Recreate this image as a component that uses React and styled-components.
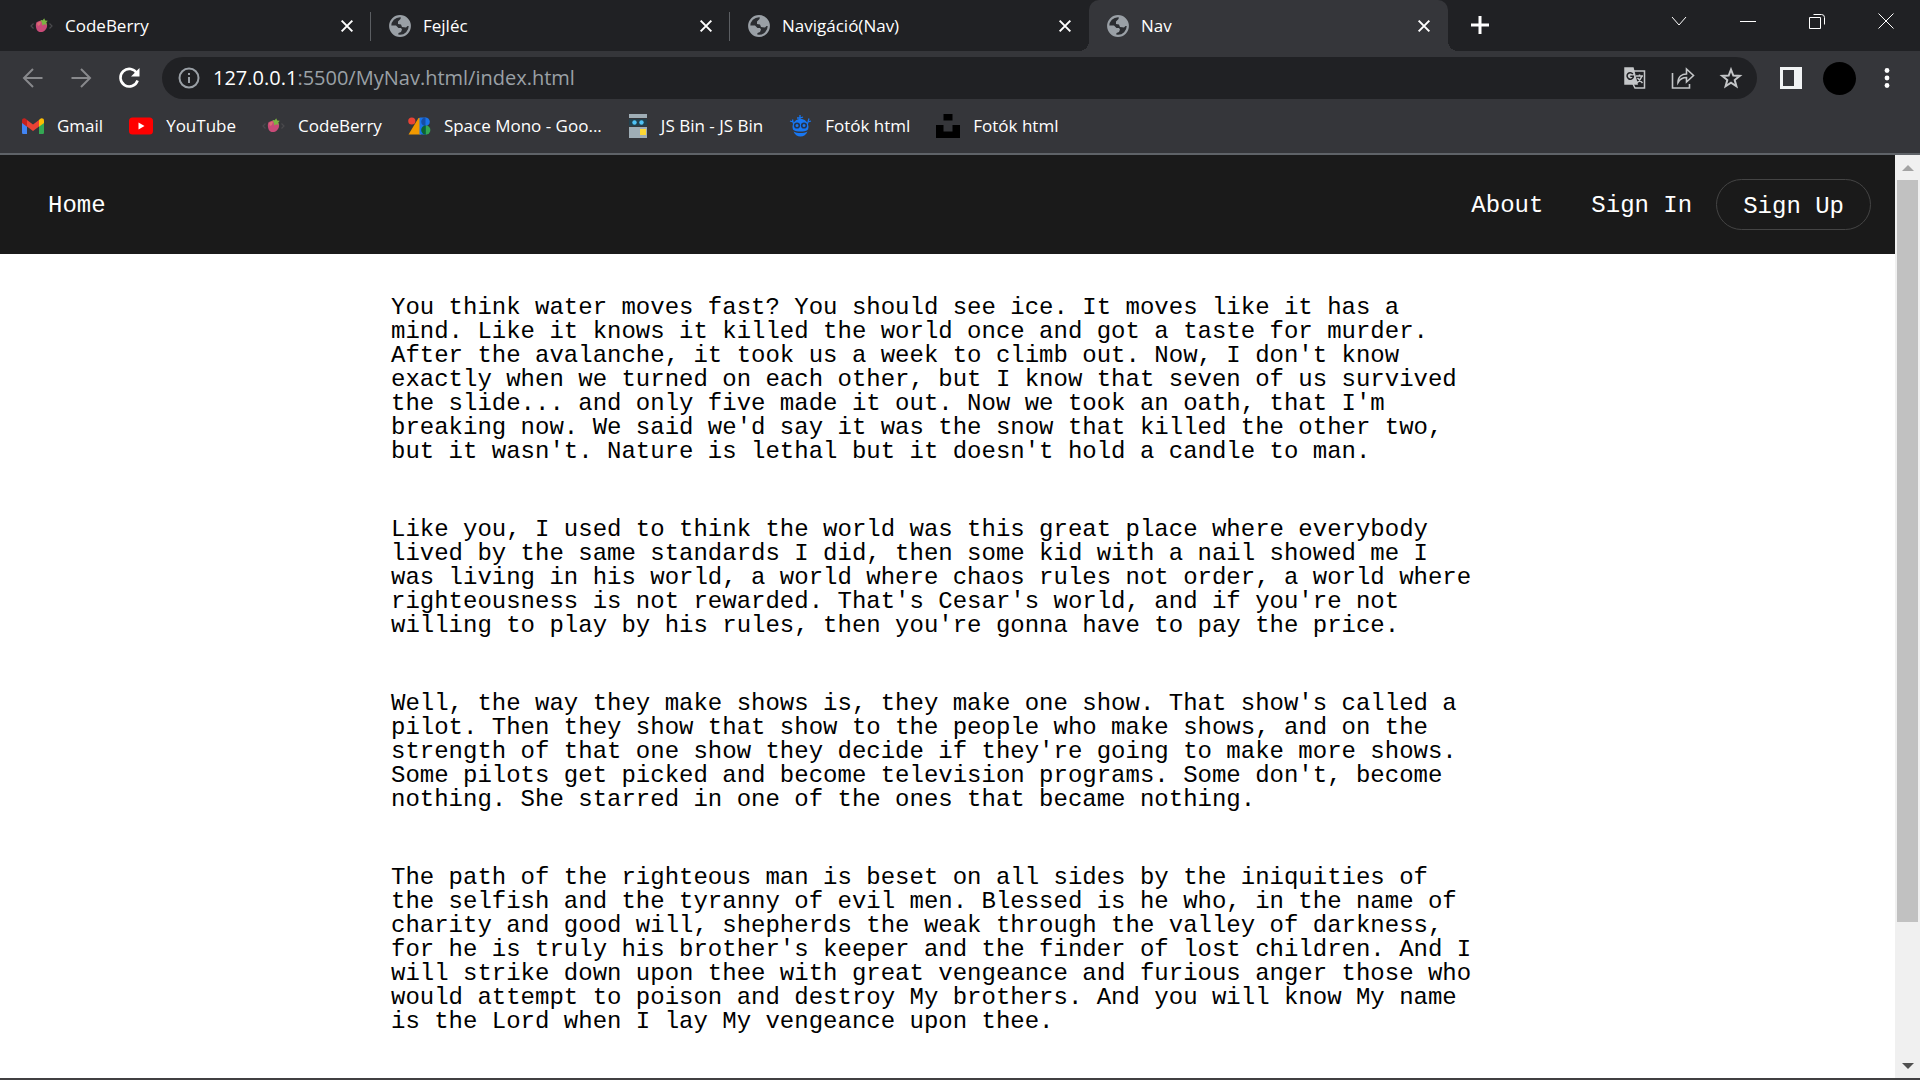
import React from 'react';
import styled, { createGlobalStyle } from 'styled-components';

const GlobalStyle = createGlobalStyle`
  * { box-sizing: border-box; }
  body { margin: 0; font-family: "Open Sans", "Noto Sans", sans-serif; }
  button { border: 0; padding: 0; background: none; color: inherit; font: inherit; }
  svg { display: block; }
`;

const Window = styled.div`
  display: flex;
  flex-direction: column;
  height: 100vh;
  overflow: hidden;
  background: #35363a;
  border-bottom: 2px solid #414042;
`;

const TabStrip = styled.div`
  display: flex;
  flex: none;
  height: 51px;
  padding-left: 12px;
  background: #202124;
  color: #fff;
`;

const Tab = styled.div`
  position: relative;
  display: flex;
  align-items: center;
  flex: 0 1 359px;
  gap: 12px;
  padding: 0 16px 0 18px;
  background: ${(p) => (p.$active ? '#35363a' : 'transparent')};
  border-radius: ${(p) => (p.$active ? '10px 10px 0 0' : '0')};

  &::before, &::after {
    content: "";
    display: ${(p) => (p.$active ? 'block' : 'none')};
    position: absolute;
    bottom: 0;
    width: 10px;
    height: 10px;
  }
  &::before { left: -10px; background: radial-gradient(circle at 0 0, #202124 10px, #35363a 10px); }
  &::after {
    right: ${(p) => (p.$active ? '-10px' : '0')};
    top: ${(p) => (p.$active ? 'auto' : '12px')};
    display: ${(p) => (p.$active || p.$divider ? 'block' : 'none')};
    width: ${(p) => (p.$active ? '10px' : '1px')};
    height: ${(p) => (p.$active ? '10px' : '29px')};
    background: ${(p) => (p.$active ? 'radial-gradient(circle at 100% 0, #202124 10px, #35363a 10px)' : '#5b5e62')};
  }
`;

const TabTitle = styled.span`
  flex: 1;
  font-size: 17px;
  line-height: 24px;
  white-space: nowrap;
`;

const IconButton = styled.button`
  display: grid;
  place-items: center;
  flex: none;
  width: ${(p) => p.$width || 48}px;
  height: ${(p) => p.$height || 42}px;
  color: ${(p) => p.$color || '#fff'};
`;

const WindowControls = styled.div`
  display: flex;
  margin-left: auto;
`;

const Toolbar = styled.div`
  display: flex;
  flex: none;
  align-items: center;
  height: 54px;
  padding: 0 9px;
`;

const AddressBar = styled.div`
  display: flex;
  flex: 1;
  align-items: center;
  height: 42px;
  margin: 0 10px 0 9px;
  padding: 0 2px 0 16px;
  border-radius: 21px;
  background: #202124;
  color: #9aa0a6;
`;

const Address = styled.div`
  flex: 1;
  padding-left: 13px;
  font-size: 20px;
  line-height: 24px;
  white-space: nowrap;
`;

const Host = styled.span`
  color: #fff;
`;

const Avatar = styled.span`
  width: 33px;
  height: 33px;
  border-radius: 50%;
  background: #000;
`;

const Bookmarks = styled.nav`
  display: flex;
  flex: none;
  align-items: flex-start;
  gap: 26px;
  height: 50px;
  padding: 9px 22px 0;
  border-bottom: 2px solid #5f6368;
`;

const Bookmark = styled.a`
  display: flex;
  align-items: center;
  gap: 13px;
  color: #fff;
  font-size: 17px;
  line-height: 24px;
  text-decoration: none;
  white-space: nowrap;
`;

const Viewport = styled.div`
  display: flex;
  flex: 1;
  min-height: 0;
`;

const Page = styled.div`
  flex: 1;
  overflow: hidden;
  background: #fff;
  color: #000;
  font-family: "Liberation Mono", monospace;
  font-size: 24px;
  line-height: 24px;
`;

const SiteNav = styled.nav`
  display: flex;
  align-items: center;
  gap: 24px;
  height: 99px;
  padding: 0 24px;
  background: #1a1a1a;
`;

const NavLink = styled.a`
  margin-right: ${(p) => (p.$first ? 'auto' : '0')};
  padding: 2px ${(p) => (p.$first ? 24 : 0)}px 0 24px;
  color: #fff;
  text-decoration: none;
`;

const SignUp = styled.button`
  height: 51px;
  padding: 4px 26px 0;
  border: 1px solid #444;
  border-radius: 26px;
  color: #fff;
`;

const Article = styled.main`
  display: flex;
  flex-direction: column;
  gap: 54px;
  padding: 42px 0 0 391px;
`;

const Paragraph = styled.p`
  max-width: 1088px;
  margin: 0;
`;

const Scrollbar = styled.div`
  display: flex;
  flex-direction: column;
  width: 25px;
  padding: 0 2px;
  background: #f0f0f0;
`;

const ScrollArrow = styled.button`
  display: grid;
  place-items: center;
  height: 25px;
  color: ${(p) => p.$color};
`;

const Track = styled.div`
  flex: 1;
`;

const Thumb = styled.div`
  height: 85%;
  background: #c1c1c1;
`;

const Globe = () => (
  <svg width="22" height="22" viewBox="0 0 22 22">
    <circle cx="11" cy="11" r="9.800" fill="#2b2d31" stroke="#9aa0a6" strokeWidth="2.200" />
    <path d="M12 1.500 11.500 4 9 6.500v2.500l3 .5 1 2.500 4 .5 1.500-1.500h2.500C21 6 17 1.500 12 1.500Z" fill="#9aa0a6" />
    <path d="M1.500 10.500H7l2.500 2.500H12l1 1.500-1 2.500-2.500 1-.5 2.500C5 20 1.500 15.500 1.500 10.500Z" fill="#9aa0a6" />
  </svg>
);

const Berry = () => (
  <svg width="23" height="22" viewBox="0 0 23 22">
    <path d="M3.500 8.500 1 11l2.500 2.500M19.500 8.500 22 11l-2.500 2.500" fill="none" stroke="#4a4a4d" strokeWidth="1.200" />
    <path d="M6.500 7.500C9 5 14.500 5 16.500 8c1.500 3 0 6.500-3 8.500-3 1.300-5.500.5-6.800-2-1-2.500-1.200-5-.2-7Z" fill="#c94b78" />
    <path d="M7 8.500c1-1.500 3-2 4-1.500l-1 3-2 1Z" fill="#dc6a72" />
    <path d="m10.500 5 2.200.3 1.500-2 1 2.200 2.500.2-1.500 2 .5 2.300-2.500-.8-2 1.300-.2-2.500Z" fill="#7cb342" />
  </svg>
);

const Gmail = () => (
  <svg width="22" height="22" viewBox="0 0 22 22">
    <path d="M0 6v11.500C0 18.500.6 19 1.500 19H5V9Z" fill="#4285f4" />
    <path d="M17 9v10h3.500c.9 0 1.500-.5 1.500-1.500V6Z" fill="#34a853" />
    <path d="M5 5v6.500l6 4.500 6-4.500V5l-6 4.500Z" fill="#ea4335" />
    <path d="M0 5.500V8l5 3.800V5L4 4C2.400 2.500 0 3.500 0 5.500Z" fill="#c5221f" />
    <path d="M22 5.500V8l-5 3.800V5l1-1c1.600-1.500 4-.5 4 1.500Z" fill="#fbbc04" />
  </svg>
);

const YouTube = () => (
  <svg width="24" height="22" viewBox="0 0 24 22">
    <rect y="2.500" width="24" height="17" rx="3.500" fill="#f00" />
    <path d="m9.500 7.500 6 3.500-6 3.500Z" fill="#fff" />
  </svg>
);

const GoogleFonts = () => (
  <svg width="23" height="22" viewBox="0 0 23 22">
    <path d="M10.500 3h2.500v16.500H0.500Z" fill="#f29900" />
    <circle cx="3.800" cy="6" r="3.600" fill="#ea4335" />
    <path d="M11.500 2.500H18v17h-6.500Z" fill="#1a73e8" />
    <path d="M17.500 2.500a4.300 4.300 0 0 1 0 8.600Z" fill="#1a73e8" />
    <path d="M17.500 2.500v8.600a4.300 4.300 0 0 1 0-8.600Z" fill="#174ea6" />
    <path d="M17.800 10.500a4.600 4.600 0 0 1 0 9.200Z" fill="#34a853" />
    <path d="M17.800 10.500a4.600 4.600 0 0 0 0 9.200Z" fill="#0d652d" />
  </svg>
);

const JsBin = () => (
  <svg width="20" height="24" viewBox="0 0 20 24">
    <path d="M1 0h18v4H1zM1 13h18v11H1z" fill="#9fadb5" />
    <path d="M1 5h18v7H1z" fill="#22414e" />
    <circle cx="6.500" cy="8.500" r="2.200" fill="#4fc3f7" /><circle cx="13.500" cy="8.500" r="2.200" fill="#4fc3f7" />
    <path d="M12 15h6v6h-6z" fill="#fdd835" />
  </svg>
);

const Robot = () => (
  <svg width="23" height="24" viewBox="0 0 23 24">
    <path d="M11 1v5M8 4h3l3-1M1 7l3 1 1 3M22 7l-3 1-1 3M3.500 5.500 4 8M20 4.500 19 8" fill="none" stroke="#1877f2" strokeWidth="1.300" />
    <path d="M3.500 12.500C4 7.500 7.500 5 11.500 5s7.500 2.500 8 7.500c0 2-.5 3-1 3.500-3 2-11 2-14 0-.5-.5-1-1.500-1-3.500ZM4.500 17.500c4 2 10 2 14 0-1 3-4 5-7 5s-6-2-7-5Z" fill="#1877f2" />
    <circle cx="8" cy="11.500" r="2.300" fill="none" stroke="#26344c" strokeWidth="1.600" /><circle cx="15" cy="11.500" r="2.300" fill="none" stroke="#26344c" strokeWidth="1.600" />
  </svg>
);

const Unsplash = () => (
  <svg width="24" height="24" viewBox="0 0 24 24"><path d="M7.500 0h9v6.500h-9zM0 11h7.500v6.500h9V11H24v13H0z" /></svg>
);

const Line = ({ d, size = 24, width = 2 }) => (
  <svg width={size} height={size} viewBox="0 0 24 24" fill="none" stroke="currentColor" strokeWidth={width}><path d={d} /></svg>
);

const CloseTab = () => (
  <IconButton aria-label="Close tab" $width={16} $height={16}><Line size={16} width={3} d="M4 4 20 20M20 4 4 20" /></IconButton>
);

const tabs = [
  { title: 'CodeBerry', Icon: Berry, divider: true },
  { title: 'Fejléc', Icon: Globe, divider: true },
  { title: 'Navigáció(Nav)', Icon: Globe },
  { title: 'Nav', Icon: Globe, active: true },
];

const bookmarks = [
  ['Gmail', Gmail], ['YouTube', YouTube], ['CodeBerry', Berry], ['Space Mono - Goo...', GoogleFonts],
  ['JS Bin - JS Bin', JsBin], ['Fotók html', Robot], ['Fotók html', Unsplash],
];

const paragraphs = [
  "You think water moves fast? You should see ice. It moves like it has a mind. Like it knows it killed the world once and got a taste for murder. After the avalanche, it took us a week to climb out. Now, I don't know exactly when we turned on each other, but I know that seven of us survived the slide... and only five made it out. Now we took an oath, that I'm breaking now. We said we'd say it was the snow that killed the other two, but it wasn't. Nature is lethal but it doesn't hold a candle to man.",
  "Like you, I used to think the world was this great place where everybody lived by the same standards I did, then some kid with a nail showed me I was living in his world, a world where chaos rules not order, a world where righteousness is not rewarded. That's Cesar's world, and if you're not willing to play by his rules, then you're gonna have to pay the price.",
  "Well, the way they make shows is, they make one show. That show's called a pilot. Then they show that show to the people who make shows, and on the strength of that one show they decide if they're going to make more shows. Some pilots get picked and become television programs. Some don't, become nothing. She starred in one of the ones that became nothing.",
  "The path of the righteous man is beset on all sides by the iniquities of the selfish and the tyranny of evil men. Blessed is he who, in the name of charity and good will, shepherds the weak through the valley of darkness, for he is truly his brother's keeper and the finder of lost children. And I will strike down upon thee with great vengeance and furious anger those who would attempt to poison and destroy My brothers. And you will know My name is the Lord when I lay My vengeance upon thee.",
];

export default function App() {
  return (
    <Window>
      <GlobalStyle />
      <TabStrip>
        {tabs.map(({ title, Icon, active, divider }) => (
          <Tab key={title} $active={active} $divider={divider}>
            <Icon /><TabTitle>{title}</TabTitle><CloseTab />
          </Tab>
        ))}
        <IconButton aria-label="New tab" $width={64} $height={50}><Line d="M12 3v18M3 12h18" width={3} /></IconButton>
        <WindowControls>
          <IconButton aria-label="Search tabs" $width={69}><Line width={1} d="m5 8 7 8 7-8" /></IconButton>
          <IconButton aria-label="Minimize" $width={69}><Line width={1} d="M4 12.500h16" /></IconButton>
          <IconButton aria-label="Restore" $width={69}><Line width={1} d="M4.500 8.500h11v11h-11zM8.500 5.500h8a3 3 0 0 1 3 3v7" /></IconButton>
          <IconButton aria-label="Close window" $width={69}><Line width={1} d="m4.500 4.500 15 15M19.500 4.500l-15 15" /></IconButton>
        </WindowControls>
      </TabStrip>
      <Toolbar>
        <IconButton aria-label="Back" $color="#88898c"><Line d="M21.500 12h-18M12 3l-9 9 9 9" /></IconButton>
        <IconButton aria-label="Forward" $color="#88898c"><Line d="M2.500 12h18M12 3l9 9-9 9" /></IconButton>
        <IconButton aria-label="Reload">
          <svg width="24" height="24" viewBox="0 0 24 24">
            <path d="M20 7.500A8.800 8.800 0 1 0 20.600 14.500" fill="none" stroke="#fff" strokeWidth="2.600" />
            <path d="M22.500 2v8.500H14Z" fill="#fff" />
          </svg>
        </IconButton>
        <AddressBar>
          <svg width="22" height="22" viewBox="0 0 22 22" fill="none" stroke="currentColor" strokeWidth="2"><circle cx="11" cy="11" r="9.500" /><path d="M11 10v6M11 6v2" /></svg>
          <Address><Host>127.0.0.1</Host>:5500/MyNav.html/index.html</Address>
          <IconButton aria-label="Translate" $color="#c4c6c8">
            <svg width="24" height="24" viewBox="0 0 24 24" fill="none" stroke="currentColor" strokeWidth="1.500">
              <path d="M11 5h10.500v17H12l-2-4" /><path d="M2 2h8l4 16H2Z" fill="currentColor" />
              <path d="M9.800 8A3.200 3.200 0 1 0 10.300 11v-.8h-3" stroke="#202124" /><path d="M13 10h7M16.500 8.500V10M19 10c-1 3-3 5-5 7M14.500 12l5 5" />
            </svg>
          </IconButton>
          <IconButton aria-label="Share" $color="#c4c6c8"><Line width={1.6} d="M1.500 7v15h17v-4M7 16.500c0-6 4-8.500 8.500-8.500V3l7 6.500-7 6.500v-4.500c-4 0-6.500 1.500-8.500 5Z" /></IconButton>
          <IconButton aria-label="Bookmark this page" $color="#c4c6c8"><Line width={2} d="m12 3.500 2.300 6.100 6.500.3-5.100 4.100 1.700 6.300L12 16.700l-5.400 3.600 1.700-6.300-5.100-4.100 6.500-.3Z" /></IconButton>
        </AddressBar>
        <IconButton aria-label="Side panel"><svg width="22" height="22" viewBox="0 0 22 22"><path fillRule="evenodd" fill="#f1f3f4" d="M0 0h22v22H0ZM3 3v16h11V3Z" /></svg></IconButton>
        <IconButton aria-label="Profile"><Avatar /></IconButton>
        <IconButton aria-label="Menu"><svg width="24" height="24" viewBox="0 0 24 24" fill="#fff"><circle cx="12" cy="4.500" r="2.400" /><circle cx="12" cy="12" r="2.400" /><circle cx="12" cy="19.500" r="2.400" /></svg></IconButton>
      </Toolbar>
      <Bookmarks aria-label="Bookmarks">
        {bookmarks.map(([name, Icon], i) => <Bookmark key={i} href="#"><Icon />{name}</Bookmark>)}
      </Bookmarks>
      <Viewport>
        <Page>
          <SiteNav>
            <NavLink href="#" $first>Home</NavLink>
            <NavLink href="#">About</NavLink>
            <NavLink href="#">Sign In</NavLink>
            <SignUp>Sign Up</SignUp>
          </SiteNav>
          <Article>
            {paragraphs.map((text) => <Paragraph key={text}>{text}</Paragraph>)}
          </Article>
        </Page>
        <Scrollbar>
          <ScrollArrow aria-label="Scroll up" $color="#a3a3a3"><svg width="12" height="6" viewBox="0 0 12 6"><path d="m0 6 6-6 6 6Z" fill="currentColor" /></svg></ScrollArrow>
          <Track><Thumb /></Track>
          <ScrollArrow aria-label="Scroll down" $color="#505050"><svg width="12" height="6" viewBox="0 0 12 6"><path d="m0 0 6 6 6-6Z" fill="currentColor" /></svg></ScrollArrow>
        </Scrollbar>
      </Viewport>
    </Window>
  );
}
